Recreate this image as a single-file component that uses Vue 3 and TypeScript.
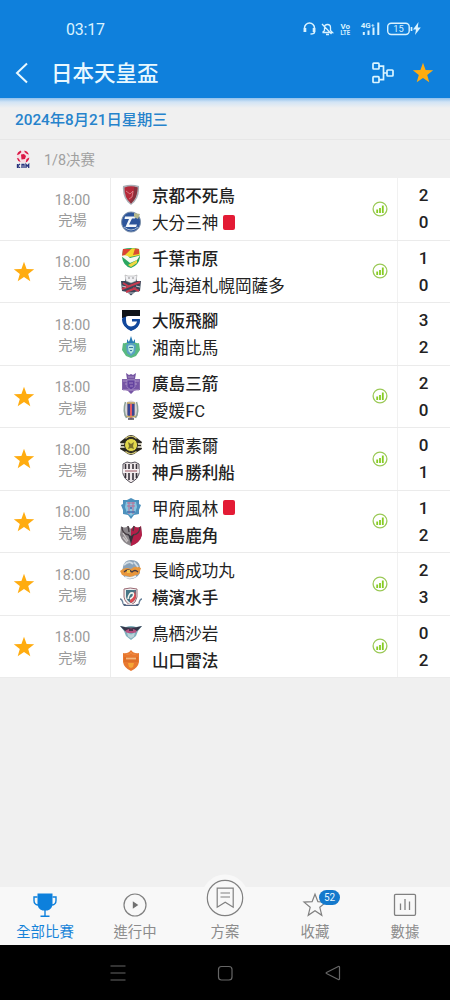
<template>
  <div class="screen">
    <header class="top">
      <div class="status-bar">
        <span class="clock">03:17</span>
        <svg class="status-icons" viewBox="0 0 120 16" fill="none" stroke="#d9f2ff" stroke-width="1.5">
          <path d="M2.5 11V7a5 5 0 0 1 10 0v4q0 2-4 2" />
          <path d="M3 7v4M12 7v4" stroke-width="2.6" />
          <path d="M20.5 11.5h10l-2-2V6.5a3 3 0 0 0-6 0v3l-2 2M20 3l9.500 10M24 13.500h3" stroke-width="1.3" />
          <path d="M61.800 14v-3M66.500 14V9.500M71.500 14V6.500M76.300 14V1.500" stroke-width="2" />
          <rect x="85.700" y="2.200" width="21.500" height="11.300" rx="3.500" stroke-width="1.400" />
          <path d="M109.500 6v4" stroke-width="1.700" />
          <path d="M116.500 1l-5.500 7.500h3l-1 5.500 5.800-7.500h-3z" fill="#d9f2ff" stroke="none" />
          <g class="status-text" fill="#d9f2ff" stroke="none">
            <text x="38.500" y="7.500" font-size="7.800" textLength="9.500" lengthAdjust="spacingAndGlyphs">Vo</text>
            <text x="38.500" y="14" font-size="7.800" textLength="9.500" lengthAdjust="spacingAndGlyphs">LTE</text>
            <text x="58.800" y="7.200" font-size="7.200" textLength="10" lengthAdjust="spacingAndGlyphs">4G</text>
            <text x="69" y="5.800" font-size="6">+</text>
            <text x="91.200" y="11" font-size="9.300" font-weight="400">15</text>
          </g>
        </svg>
      </div>
      <div class="title-bar">
        <svg class="back" viewBox="0 0 14 22"><path d="M12 1.500L2 11l10 9.500" fill="none" stroke="#e8f8ff" stroke-width="2" /></svg>
        <h1>日本天皇盃</h1>
        <svg class="bracket" viewBox="0 0 22 22" fill="none" stroke="#dcf5ff" stroke-width="1.700">
          <rect x="1" y="1.200" width="6" height="5.800" rx=".8" />
          <rect x="1" y="14.700" width="6" height="5.800" rx=".8" />
          <rect x="15" y="8" width="6" height="6" rx=".8" />
          <path d="M7 4.200h4.500v13.400H7M11.500 11H15" />
        </svg>
        <svg class="star" viewBox="0 0 22 22"><path :d="starPath" fill="#ffac10" /></svg>
      </div>
    </header>

    <div class="date-row">2024年8月21日星期三</div>
    <div class="round-row">
      <svg class="league" viewBox="0 0 14 18">
        <circle cx="7" cy="6.500" r="6.300" fill="#f6dfe5" />
        <path d="M5 4.500l3-.5 2 2-1 3-3.500.5zM.8 5q.5-3 3.700-4.500L5.500 2 3 4.500zM8.500.4q3 .6 4.500 4l-2-.4-2.500-2zM.8 8l2 .500 1.800 3.500q-3-.7-3.800-4zM10.500 9l2.800-1.500q-.3 3.500-3.600 5z" fill="#db1745" />
        <path d="M1.500 14v4M4 14l-2.500 2L4 18M6 18v-3.500h2V18M10 18v-3.500l1.300 1.500 1.400-1.500V18" stroke="#29347d" stroke-width="1.300" fill="none" />
      </svg>
      <span>1/8决赛</span>
    </div>

    <main>
      <section v-for="(m, i) in matches" :key="i" class="match">
        <div class="fav">
          <svg v-if="m.fav" class="star" viewBox="0 0 22 22"><path :d="starPath" fill="#ffac10" /></svg>
        </div>
        <div class="time"><span>18:00</span><span>完場</span></div>
        <div class="teams">
          <div v-for="(t, k) in m.teams" :key="t.name" class="team" :class="{ winner: isWinner(m, k) }">
            <svg class="crest" viewBox="0 0 22 22">
              <path
                v-for="(s, n) in t.crest"
                :key="n"
                :d="s[0]"
                :fill="s[1]"
                :stroke="s[2] || 'none'"
                :stroke-width="s[3] || 1"
              />
            </svg>
            <span>{{ t.name }}</span>
            <i v-if="t.red" class="red-card"></i>
          </div>
        </div>
        <div class="stats">
          <svg v-if="m.stats" viewBox="0 0 16 16" fill="none">
            <circle cx="8" cy="8" r="6.900" stroke="#9bc957" stroke-width="1.300" />
            <path d="M5.200 12V8.500M8 12V7M10.800 12V4.500" stroke="#86cc22" stroke-width="1.800" />
          </svg>
        </div>
        <div class="score"><b v-for="(t, k) in m.teams" :key="k">{{ t.goals }}</b></div>
      </section>
    </main>

    <nav class="tabs">
      <div class="tab active">
        <svg viewBox="0 0 26 26">
          <path d="M5.500 1.500h15v10q0 5.500-5 7h-5q-5-1.500-5-7z" fill="#0d80dc" />
          <path d="M5.500 5H2v3.500q0 4 4 4.500M20.500 5H24v3.500q0 4-4 4.500M13 18v6M8.500 24.300h9" fill="none" stroke="#0d80dc" stroke-width="1.400" />
        </svg>
        <span>全部比賽</span>
      </div>
      <div class="tab">
        <svg viewBox="0 0 26 26"><circle cx="13" cy="13" r="11" fill="none" stroke="#808080" stroke-width="1.200" /><path d="M10.800 9.300l5.500 3.700-5.500 3.700z" fill="#707070" /></svg>
        <span>進行中</span>
      </div>
      <div class="tab plan">
        <svg viewBox="0 0 48 48" fill="none" stroke="#808080" stroke-width="1.200">
          <circle cx="24" cy="24" r="23.500" fill="#f8f8f8" stroke="none" />
          <circle cx="24" cy="24" r="17.700" />
          <path d="M16.200 14.200h16v19l-8-5-8 5zM19.500 19h9.500M19.500 23h9.500" />
        </svg>
        <span>方案</span>
      </div>
      <div class="tab">
        <svg viewBox="0 0 26 26"><path d="M13 2.200l2.900 7.400 8.100.5-6.200 5.200 2 8-6.800-4.500-6.800 4.500 2-8L2 10.100l8.100-.5z" fill="none" stroke="#808080" stroke-width="1.200" /></svg>
        <em class="badge">52</em>
        <span>收藏</span>
      </div>
      <div class="tab">
        <svg viewBox="0 0 26 26" fill="none" stroke="#808080" stroke-width="1.300"><rect x="2.500" y="2.300" width="21" height="21" rx="1.200" /><path d="M8.500 18v-6.500M13 18V7M17.500 18V9.500" /></svg>
        <span>數據</span>
      </div>
    </nav>

    <footer class="system-nav">
      <svg viewBox="0 0 20 20"><path d="M2.500 3h15M2.500 10h15M2.500 17h15" /></svg>
      <svg viewBox="0 0 20 20"><rect x="3.500" y="3.500" width="13.500" height="13.500" rx="3" /></svg>
      <svg viewBox="0 0 20 20"><path d="M16.500 4.200v11.600q0 1.200-1.200.7L3.500 10.500q-.8-.5 0-1L15.300 3.500q1.200-.5 1.200.7z" /></svg>
    </footer>
  </div>
</template>

<script setup lang="ts">
// path data, fill, stroke, stroke width
type Shape = [string, string, string?, number?];

interface Team {
  name: string;
  goals: number;
  crest: Shape[];
  red?: boolean;
}

interface Match {
  fav: boolean;
  stats: boolean;
  teams: [Team, Team];
}

const starPath = 'M11 .8l2.600 7.100 7.600.3-6 4.700 2.100 7.300L11 16l-6.300 4.200 2.100-7.300-6-4.700 7.600-.3z';

const crests: Record<string, Shape[]> = {
  kyoto: [
    ['M3 2q8-2.500 16 0q1 13-8 19Q2 15 3 2z', '#a9aeb5'],
    ['M4.500 3.500q6.500-2.500 13 0q0 10-6.500 16Q4 13.500 4.500 3.500z', '#b52a3a'],
    ['M14 3l3.500.5q0 10-6.500 16l-1-2q5-5 4-14.500z', '#85333e'],
    ['M6 7l4 3 3-3-1 6-3 2', 'none', '#dc8d94', .8],
  ],
  oita: [
    ['M11 1a9.500 10 0 1 0 .1 0z', '#2d559b', '#8395ac', 1],
    ['M5 5.500h11l-1 2h-3l-3 6h8l-1 2.500H5.500l3.500-8H4.500z', '#f3f7fb'],
    ['M14 2l6 1-2 5-4-2z', '#b5b88f'],
    ['M4 16q7 6 14 0', 'none', '#a8bdd5', 1],
  ],
  chiba: [
    ['M3 2q8-2 16 0l1 8q-1 8-9 11Q3 19 2 10z', '#2ba660'],
    ['M3 2h9L4 9H2z', '#dc4333'],
    ['M12 1.300l7 .7 1 6-10 2-6-1z', '#f4d82f'],
    ['M15 1.500l4 .5v5l-6 1z', '#d94b32'],
    ['M1 9q6-2 9 2l10-2.500-3 4.500-7 3-5-4z', '#f5fbf2'],
    ['M8 18l9-5v3l-6 4z', '#f0d641'],
  ],
  sapporo: [
    ['M6 4h10l1 3h4l-1 10-5 1-4 3.500L7 18l-5-1L1 7h4z', '#39475a'],
    ['M5 1l3 1h6l3-1-1 6-5 2-5-2z', '#f0f0f3', '#999', .5],
    ['M2 15L20 8M3 9l5 3M13 14l6 3M6 18l10-4', 'none', '#c63b50', 2],
    ['M2 12l4 1M16 12l4 1M8 19h6', 'none', '#c8ced4', 1],
    ['M8.500 4h1M12.500 4h1', 'none', '#333', 1],
  ],
  gamba: [
    ['M2 1h18v6H2z', '#101418'],
    ['M2 10h3q0 7 6 7 5 0 6-4h-6v-3h9q0 9-9 11.500Q2 18 2 10z', '#12489c'],
    ['M5 7h13q0 2-4 1-5 0-6 2-1 5 3 5 2 0 3-2h-3v-3h8v2q-1 7-8 7-7-1-6.500-9z', '#fff'],
    ['M2 7h4v4q0 6 5 6.500 5 0 6.500-6.500H20q0 8-9 11Q2 18 2 7z', '#12489c'],
    ['M2 1h18v6H8L2 9z', '#101418'],
    ['M12 10h7v2.500h-7z', '#12489c'],
  ],
  shonan: [
    ['M3 7q4 1 8-3 4 4 8 3l1 7-4 6-5 2-5-2-4-6z', '#59b981'],
    ['M6 9l5-3 5 3-1 8-4 3-4-3z', '#5a9fc4'],
    ['M7 7V3l2 3 2-6 2 6 2-3v4z', '#287bb5'],
    ['M8 10q3-2 6 0l-.5 5-2.500 3-2.500-3z', '#b8e7e2'],
    ['M9 11.500h4M10 14.500h2', 'none', '#367aa0', 1],
  ],
  hiroshima: [
    ['M2 7h18v11H2z', '#8367ab'],
    ['M6 1l3 2 2-1 2 1 3-2-1 6H7z', '#7555a2'],
    ['M3 8h16v9l-5 2-3 3-3-3-5-2z', '#7655a5'],
    ['M3 9h5M14 9h5M3 18h16M5 12h3M14 12h3M8 5h6', 'none', '#ad94c7', 1],
    ['M7 8h8v7l-4 3-4-3z', '#6443a0', '#b49dcd', .6],
    ['M9 11h4M10 14h3', 'none', '#a083bf', 1],
  ],
  ehime: [
    ['M7 3q4-3 8 0l3 5v9l-7 4-7-4V8z', '#d8d6d9'],
    ['M7 4h8v12l-4 4-4-4z', '#7d7899'],
    ['M9 5v13M13 5v13', 'none', '#394593', 2],
    ['M11 5v14', 'none', '#e05a66', 2],
    ['M7 4h8M6 17.500h10', 'none', '#c5a55c', 1.500],
    ['M5.500 3q-3 9 1 16M16.500 3q3 9-1 16', 'none', '#8da198', 1.500],
    ['M8 20h6', 'none', '#514b57', 1.500],
  ],
  kashiwa: [
    ['M5 4q6-6 12 0l5 4-1 3 1 4-5 3q-6 6-12 0l-5-3 1-4-1-3z', '#292720'],
    ['M0 10h6M0 13h6M22 10h-6M22 13h-6', 'none', '#f6f2de', 1.300],
    ['M11 4.500a6.500 6.500 0 1 0 .1 0z', '#e2d84c', '#302e24', 1],
    ['M8 8l3 2 3-2-1 4 1 3-3-1-3 1 1-3z', '#79712e'],
    ['M5.500 4.500q5.500-4.500 11 0M5.500 17.500q5.500 4.500 11 0', 'none', '#d7cb79', 1.200],
  ],
  kobe: [
    ['M3 3l4-2 4 1 4-1 4 2v10q-1 5-8 9-7-4-8-9z', '#eee7e9', '#55515a', 1],
    ['M5.500 3v14M9 3v16M13 3v16M16.500 3v14', 'none', '#36323a', 1.600],
    ['M3 8h16v4H3z', '#f4eff1'],
    ['M5 10h12', 'none', '#b58089', 1.400],
  ],
  kofu: [
    ['M3 3l4 0 4-2 4 2h4v4l2 1-2 5 0 4-5 1-3 4-3-4-5-1v-4L1 8l2-1z', '#4d91bd'],
    ['M6 5h10l1 5-2 6-4 3-4-3-2-6z', '#88c5df'],
    ['M7 6h8M7 9h8M9 5v12M13 5v12', 'none', '#bb6d91', 1],
    ['M7 15h8M10 11h2', 'none', '#426eaf', 1.500],
  ],
  kashima: [
    ['M1 2q3 3 7 0l3 3 3-3q4 3 7 0l1 9q-2 8-11 11Q2 19 0 11z', '#8b868a'],
    ['M11 5l3-3q4 3 7 0l1 9q-2 8-11 11z', '#b51e48'],
    ['M2 3q0 7 7 8M20 3q0 7-7 8M8 2l1 6M14 2l-1 5', 'none', '#463d43', 1.400],
    ['M8 10l3 10 3-10-3 2z', '#34313a'],
    ['M3 9l5 8M3 13l4 5', 'none', '#c9c4c5', 1.300],
  ],
  nagasaki: [
    ['M3 8Q4 1 11 1q8 0 9 7v6q-4 7-12 6-8-3-5-12z', '#8ba2b8'],
    ['M0 12q5-5 11-2 4-4 10-1l-2 6-8 3-9-2z', '#e8963c'],
    ['M4 6q5-5 9-1M14 3l4 5', 'none', '#d2dce4', 1.800],
    ['M4 13q4-4 8 0 3-3 6 0', 'none', '#463d43', 1.200],
    ['M5 18q6 2 11-1', 'none', '#eff1f1', 1.800],
    ['M7 11h3v3H7z', '#f2c54b'],
  ],
  yokohama: [
    ['M4 3q6-2 13 0v8q-1 6-6 8-6-2-7-8z', '#edf0f0', '#9a6872', 1],
    ['M6 4h10v7q-1 4-5 6-4-2-5-6z', '#467687'],
    ['M15 4l1 7q-1 4-5 6-2-1-1-3 4-3 5-10z', '#dc4b52'],
    ['M8 13q1-7 5-6 2 3-3 6', 'none', '#f7f6ef', 1.500],
    ['M0 13q2 0 3 4M22 13q-2 0-3 4', 'none', '#68829a', 1.300],
    ['M2 17q9 4 18 0l-2 3H4z', '#526480'],
    ['M6 18.500h10', 'none', '#d9d0d6', 1],
  ],
  tosu: [
    ['M0 4l6 1q5-2 10 0l6-1-4 5-2 5-5 4-5-4-2-5z', '#7eaebb'],
    ['M0 4q11 3 22 0l-5 5H5z', '#353548'],
    ['M5 9q6-5 12 0l-2 2H7z', '#b45280'],
    ['M7 10.500l4 2 4-2-1 4-3 2-3-2z', '#b9d2d8'],
    ['M9 8h4', 'none', '#292a39', 1.500],
  ],
  yamaguchi: [
    ['M3 4q5 1 8-3 3 4 8 3v9q-1 6-8 9-7-3-8-9z', '#e8782f'],
    ['M4 8h14v5H4z', '#df6e27'],
    ['M6 9.500h10', 'none', '#f3b67c', 1.800],
    ['M8 14h6l-1 4-2 1-2-1z', '#f5a637'],
    ['M6 5q5 1 5-2 0 3 5 2', 'none', '#f08f49', 1],
  ],
};

const team = (name: string, goals: number, key: string, red = false): Team => ({ name, goals, crest: crests[key], red });

const matches: Match[] = [
  { fav: false, stats: true, teams: [team('京都不死鳥', 2, 'kyoto'), team('大分三神', 0, 'oita', true)] },
  { fav: true, stats: true, teams: [team('千葉市原', 1, 'chiba'), team('北海道札幌岡薩多', 0, 'sapporo')] },
  { fav: false, stats: false, teams: [team('大阪飛腳', 3, 'gamba'), team('湘南比馬', 2, 'shonan')] },
  { fav: true, stats: true, teams: [team('廣島三箭', 2, 'hiroshima'), team('愛媛FC', 0, 'ehime')] },
  { fav: true, stats: true, teams: [team('柏雷素爾', 0, 'kashiwa'), team('神戶勝利船', 1, 'kobe')] },
  { fav: true, stats: true, teams: [team('甲府風林', 1, 'kofu', true), team('鹿島鹿角', 2, 'kashima')] },
  { fav: true, stats: true, teams: [team('長崎成功丸', 2, 'nagasaki'), team('橫濱水手', 3, 'yokohama')] },
  { fav: true, stats: true, teams: [team('鳥栖沙岩', 0, 'tosu'), team('山口雷法', 2, 'yamaguchi')] },
];

function isWinner(m: Match, k: number) {
  return m.teams[k].goals > m.teams[1 - k].goals;
}
</script>

<style>
body {
  margin: 0;
  overflow: hidden;
}
</style>

<style scoped>
.screen {
  width: 450px;
  height: 1000px;
  display: flex;
  flex-direction: column;
  background: #f0f0f0;
  font-family: Roboto, "Noto Sans CJK TC", sans-serif;
  color: #222;
}

svg {
  display: block;
  flex: none;
}

.top {
  height: 98px;
  flex: none;
  background: #0f80dc;
}

.status-bar {
  height: 48px;
  box-sizing: border-box;
  padding: 10px 28px 0 66px;
  display: flex;
  align-items: center;
  justify-content: space-between;
}

.clock {
  font-size: 16px;
  letter-spacing: -0.2px;
  color: #d9f2ff;
}

.status-icons {
  width: 120px;
  height: 16px;
}

.status-text {
  font-weight: 700;
}

.title-bar {
  height: 50px;
  display: flex;
  align-items: center;
  padding: 0 16px 0 15px;
}

.back {
  width: 14px;
  height: 22px;
}

h1 {
  margin: 2px auto 0 22px;
  font-size: 21.5px;
  line-height: 30px;
  font-weight: 500;
  color: #e8f8ff;
}

.bracket {
  width: 22px;
  height: 22px;
  margin-right: 18.5px;
}

.star {
  width: 22px;
  height: 22px;
}

.date-row {
  height: 41px;
  flex: none;
  box-sizing: border-box;
  padding: 0 15px;
  line-height: 44px;
  font-size: 15.3px;
  font-weight: 500;
  color: #2683cc;
  background: linear-gradient(#8fc0ec, #d2e4f5 4px, #f0f0f0 10px);
}

.round-row {
  height: 39px;
  flex: none;
  box-sizing: border-box;
  border-top: 1px solid #e7e7e7;
  padding-left: 16px;
  display: flex;
  align-items: center;
  font-size: 14.4px;
  color: #a0a0a0;
}

.round-row span {
  margin-top: -2px;
}

.league {
  width: 14px;
  height: 18px;
  margin-right: 14px;
}

.match {
  height: 62.5px;
  box-sizing: border-box;
  border-bottom: 1px solid #ebebeb;
  background: #fff;
  display: grid;
  grid-template-columns: 48px 63px 252px 35px 1fr;
}

.fav {
  display: flex;
  align-items: center;
  justify-content: center;
  padding-top: 1px;
}

.time {
  display: flex;
  flex-direction: column;
  padding: 11.5px 13px 0 0;
  align-items: center;
  font-size: 14.2px;
  line-height: 20.5px;
  color: #9a9a9a;
  border-right: 1px solid #ececec;
}

.teams {
  padding: 4px 0 0 9px;
}

.team {
  height: 26.7px;
  display: flex;
  align-items: center;
  font-size: 16.6px;
  white-space: nowrap;
}

.team.winner {
  font-weight: 500;
}

.crest {
  width: 22px;
  height: 22px;
  margin-right: 10px;
}

.red-card {
  width: 12px;
  height: 15px;
  margin-left: 5px;
  border-radius: 2px;
  background: #e31b35;
}

.stats {
  display: flex;
  align-items: center;
  padding-left: 9px;
  border-right: 1px solid #f1f1f1;
}

.stats svg {
  width: 16px;
  height: 16px;
}

.score {
  display: flex;
  flex-direction: column;
  align-items: center;
  padding: 4px 1px 0 0;
  font-size: 17px;
  line-height: 27px;
}

.score b {
  font-weight: 500;
}

.tabs {
  height: 58px;
  flex: none;
  margin-top: auto;
  display: grid;
  grid-template-columns: repeat(5, 1fr);
  background: #f8f8f8;
}

.tab {
  position: relative;
  display: flex;
  flex-direction: column;
  align-items: center;
  padding-top: 5px;
  font-size: 14.4px;
  line-height: 20px;
  color: #8c8c8c;
}

.tab svg {
  width: 26px;
  height: 26px;
  margin-bottom: 5px;
}

.tab.active {
  color: #1683d8;
}

.tab.plan svg {
  width: 48px;
  height: 48px;
  margin-top: -18px;
  margin-bottom: 1px;
}

.badge {
  position: absolute;
  left: 49px;
  top: 3px;
  width: 21px;
  height: 15px;
  border-radius: 8px;
  background: #1479cc;
  color: #e9f7ff;
  font-size: 10px;
  font-style: normal;
  line-height: 15px;
  text-align: center;
}

.system-nav {
  height: 55px;
  flex: none;
  background: #000;
  display: flex;
  align-items: center;
  justify-content: center;
  gap: 87.5px;
}

.system-nav svg {
  width: 20px;
  height: 20px;
  fill: none;
  stroke: #666;
  stroke-width: 1.200;
}
</style>
